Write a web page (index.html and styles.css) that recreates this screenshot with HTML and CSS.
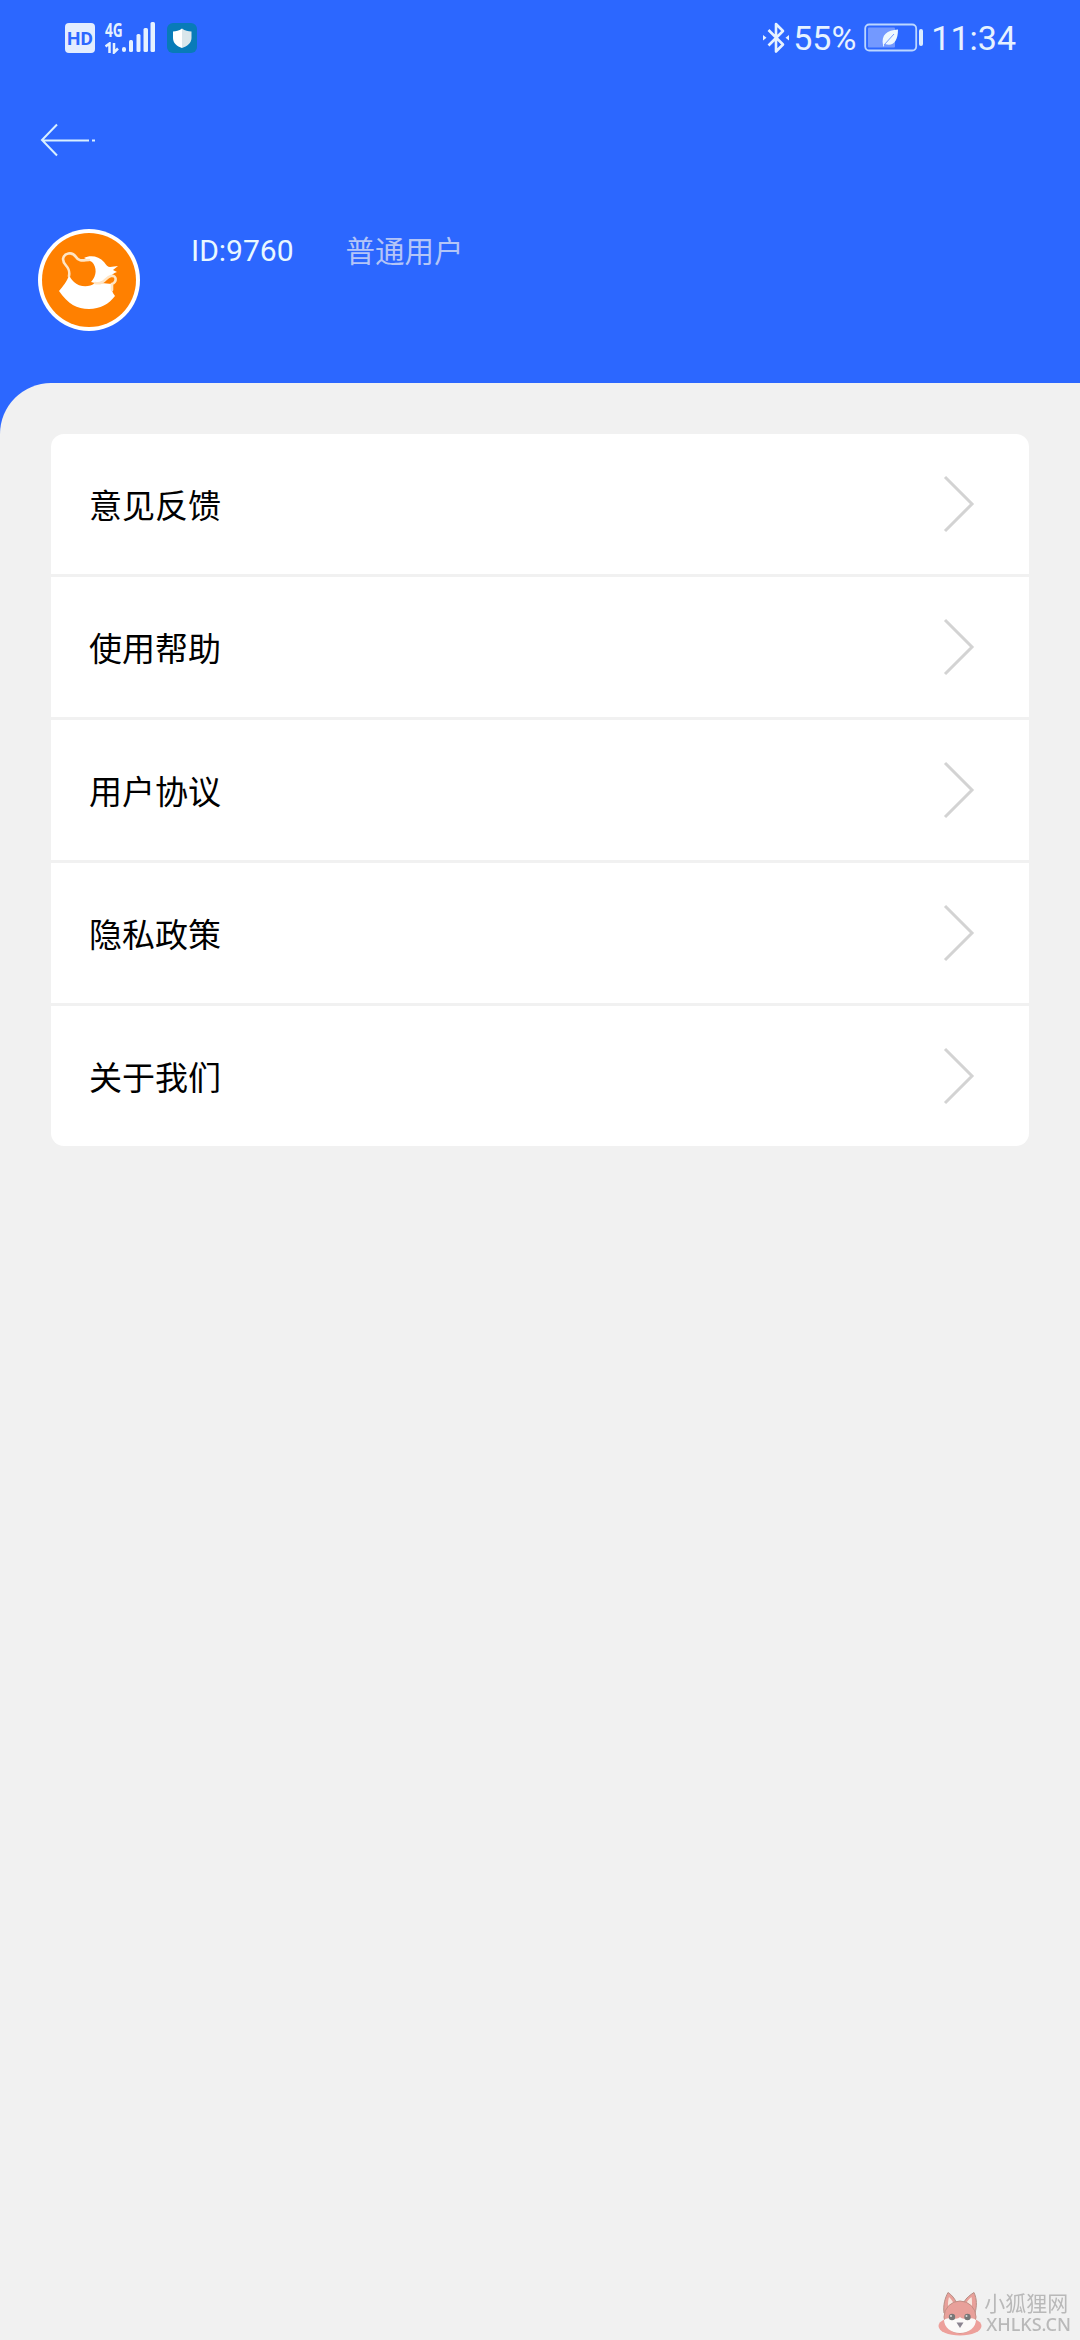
FILE: index.html
```html
<!DOCTYPE html>
<html lang="zh-CN">
<head>
  <meta charset="UTF-8">
  <meta name="viewport" content="width=device-width, initial-scale=1.0">
  <title>个人中心</title>
  <link rel="stylesheet" href="styles.css">
</head>
<body>
  <header class="header">
    <div class="status-bar">
      <div class="status-left">
        <span class="hd-badge">HD</span>
        <div class="network">
          <span class="network-type">4G</span>
          <svg class="network-arrows" viewBox="0 0 16 12">
            <path d="M0.500 4.500 L4.500 1.500 V11 M9 1 V10.500 L13 6.500" />
          </svg>
        </div>
        <svg class="signal" viewBox="0 0 36 32">
          <rect x="1" y="26" width="4" height="5" rx="2" />
          <rect x="8" y="19" width="4" height="12" rx="1.500" />
          <rect x="15.500" y="13" width="4" height="18" rx="1.500" />
          <rect x="22.500" y="7" width="4.500" height="24" rx="1.500" />
          <rect x="29.500" y="1" width="4.500" height="30" rx="1.500" />
        </svg>
        <svg class="shield" viewBox="0 0 30 30">
          <rect width="30" height="30" rx="6" fill="#087bb8" />
          <path d="M15 5.500 C12 8 9 8 6 8.500 V15 C6 20 10 23.500 15 25 Z" fill="#fff" />
          <path d="M15 5.500 C18 8 21 8 24.500 8.500 V15 C24.500 20 20 23.500 15 25 Z" fill="#d9e6eb" />
        </svg>
      </div>
      <div class="status-right">
        <svg class="bluetooth" viewBox="0 0 26 34">
          <path d="M5.500 9 L20 23.500 L13 30.500 V3 L20 10 L5.500 24.500" />
          <path class="dot" d="M0 14 L3.500 16.800 L0 19.500 Z M26 14 L22.500 16.800 L26 19.500 Z" />
        </svg>
        <span class="battery-level">55%</span>
        <svg class="battery" viewBox="0 0 60 30">
          <rect x="1.200" y="1.500" width="51" height="26" rx="4" fill="none" stroke="#bcd7ff" stroke-width="1.800" />
          <rect x="4" y="4.500" width="27" height="20" rx="1" fill="#7399ff" />
          <path d="M19 22 C17 12 23 7 34 6.500 C34 18 29 24 21 21 L19 24 Z" fill="#eef8ff" />
          <path d="M20 22 L30 11" stroke="#7399ff" stroke-width="1" />
          <rect x="55" y="6" width="4" height="17" rx="2" fill="#dcecff" />
        </svg>
        <span class="clock">11:34</span>
      </div>
    </div>

    <button class="back-button" aria-label="返回">
      <svg viewBox="0 0 56 34">
        <path d="M17 1.500 L2 17 L17 32.500 M2 17.400 H49 M52 17.400 H55" />
      </svg>
    </button>

    <div class="profile">
      <div class="avatar">
        <svg viewBox="0 0 102 102">
          <circle cx="51" cy="51" r="51" fill="#fff" />
          <circle cx="51" cy="51" r="47" fill="#ff8000" />
          <path class="pot" d="M31 46 C29 53 25 57 21 62 C30 75 39 80 51 80 C62 80 71 75 77 67 C74 63 73 60 74 55 C66 54 61 54 57 54 C51 59 41 58 36 53 C33 50 32 48 31 46 Z" />
          <path class="pot" d="M46 29 C52 26 61 27 66 33 C68 36 70 38 72 38 L80 37 L75 41 L79 43 C72 45 70 53 57 54 L53 53 C59 47 59 38 54 33 Z" />
          <path class="handle" d="M31 47 C33 37 25 37 25 30 C26 24 34 22 38 28 C41 33 46 31 51 31" />
          <path class="handle" d="M57 54 C67 56 67 48 73 47 C79 46 79 53 74 55 V61" />
        </svg>
      </div>
      <span class="user-id">ID:9760</span>
      <span class="user-role">普通用户</span>
    </div>
  </header>

  <main class="content">
    <ul class="menu-list">
      <li class="menu-item">
        <span>意见反馈</span>
        <svg class="arrow" viewBox="0 0 32 58"><path d="M2 2 L29 29 L2 56" /></svg>
      </li>
      <li class="menu-item">
        <span>使用帮助</span>
        <svg class="arrow" viewBox="0 0 32 58"><path d="M2 2 L29 29 L2 56" /></svg>
      </li>
      <li class="menu-item">
        <span>用户协议</span>
        <svg class="arrow" viewBox="0 0 32 58"><path d="M2 2 L29 29 L2 56" /></svg>
      </li>
      <li class="menu-item">
        <span>隐私政策</span>
        <svg class="arrow" viewBox="0 0 32 58"><path d="M2 2 L29 29 L2 56" /></svg>
      </li>
      <li class="menu-item">
        <span>关于我们</span>
        <svg class="arrow" viewBox="0 0 32 58"><path d="M2 2 L29 29 L2 56" /></svg>
      </li>
    </ul>
  </main>

  <div class="watermark">
    <svg class="fox" viewBox="0 0 44 46">
      <ellipse cx="22" cy="35" rx="21.500" ry="9.500" fill="#eda09b" />
      <path d="M6 22 C5 14 7 7 10 1.500 C14 4 17 8 18 11 H26 C28 7 32 4 36 1.500 C39 8 39 15 37 22 Z" fill="#e8a09a" stroke="#b68f86" stroke-width="1" />
      <path d="M10 14 C10 10 10.500 8 11 6 C14 9 15 11 16 13 L10 17 Z M34 14 C34 10 34 8 33.500 6 C31 8 29 10 28 13 L33 17 Z" fill="#f8e7df" />
      <circle cx="22" cy="26" r="16" fill="#e8a09a" stroke="#c28e85" stroke-width="1" />
      <path d="M6 29 C12 25 19 30 22 26 C25 30 32 25 38 29 C38 36 31 42 22 42 C13 42 6 36 6 29 Z" fill="#fbf9f8" />
      <circle cx="14" cy="26" r="3.200" fill="#777" />
      <circle cx="29.500" cy="26" r="3.200" fill="#777" />
      <circle cx="13" cy="25" r="1" fill="#ddd" />
      <circle cx="28.500" cy="25" r="1" fill="#ddd" />
      <path d="M18.500 31.500 H25.500 L22 37 Z" fill="#8b8490" />
    </svg>
    <div class="watermark-text">
      <span class="watermark-name">小狐狸网</span>
      <span class="watermark-url">XHLKS.CN</span>
    </div>
  </div>
</body>
</html>
```

FILE: styles.css
```css
* {
  margin: 0;
  padding: 0;
  box-sizing: border-box;
}

body {
  font-family: Roboto, 'Noto Sans CJK SC', sans-serif;
  background-color: #f1f1f1;
  color: #000;
  min-height: 100vh;
}

svg {
  display: block;
  flex-shrink: 0;
}

.header {
  height: 434px;
  background: #2c67ff;
}

.status-bar {
  height: 76px;
  padding: 0 64px 0 65px;
  display: flex;
  align-items: center;
  justify-content: space-between;
  color: #e6f2ff;
}

.status-left,
.status-right {
  display: flex;
  align-items: center;
}

.hd-badge {
  width: 30px;
  height: 30px;
  border-radius: 4px;
  background: #e3edff;
  color: #2c67ff;
  font-size: 19px;
  font-weight: 700;
  line-height: 31px;
  text-align: center;
}

.network {
  width: 16px;
  margin-left: 10px;
  display: flex;
  flex-direction: column;
  gap: 5px;
}

.network-type {
  font-family: 'Open Sans', sans-serif;
  font-size: 19px;
  font-weight: 700;
  line-height: 14px;
  transform: scaleX(0.72);
  transform-origin: left;
}

.network-arrows {
  width: 16px;
  height: 12px;
  fill: none;
  stroke: #e6f2ff;
  stroke-width: 2.5;
}

.signal {
  width: 36px;
  height: 32px;
  margin-top: -2px;
  fill: #e6f2ff;
}

.shield {
  width: 30px;
  height: 30px;
  margin-left: 10px;
}

.bluetooth {
  width: 26px;
  height: 34px;
  margin-top: -1px;
  fill: none;
  stroke: #e6f2ff;
  stroke-width: 2.6;
  stroke-linejoin: round;
}

.bluetooth .dot {
  fill: #e6f2ff;
  stroke: none;
}

.battery-level,
.clock {
  font-size: 34px;
  line-height: 76px;
}

.battery-level {
  margin-left: 4px;
}

.battery {
  width: 60px;
  height: 30px;
  margin: 0 7px 0 8px;
}

.back-button {
  display: block;
  height: 34px;
  margin: 47px 0 0 40px;
  background: none;
  border: none;
}

.back-button svg {
  width: 56px;
  height: 34px;
  fill: none;
  stroke: #d9f0ff;
  stroke-width: 2;
}

.profile {
  display: flex;
  align-items: flex-start;
  margin-top: 72px;
  padding-left: 38px;
}

.avatar svg {
  width: 102px;
  height: 102px;
}

.pot {
  fill: #fff;
}

.handle {
  fill: none;
  stroke: #ffe5c5;
  stroke-width: 2.6;
  stroke-linecap: round;
}

.user-id {
  margin-left: 51px;
  font-size: 30px;
  line-height: 43px;
  color: #e9f8ff;
}

.user-role {
  margin-left: 52px;
  font-family: 'Noto Sans CJK SC', sans-serif;
  font-size: 29.5px;
  line-height: 40px;
  color: #b4c5f7;
}

/* overlaps the header so the rounded corner shows blue */
.content {
  margin-top: -51px;
  padding: 51px;
  background: #f1f1f1;
  border-top-left-radius: 51px;
}

.menu-list {
  list-style: none;
  display: flex;
  flex-direction: column;
  gap: 3px;
  border-radius: 13px;
  overflow: hidden;
}

.menu-item {
  height: 140px;
  padding: 0 54px 0 38px;
  background: #fff;
  display: flex;
  align-items: center;
  justify-content: space-between;
  font-family: 'Noto Sans CJK SC', sans-serif;
  font-size: 33px;
}

.arrow {
  width: 32px;
  height: 58px;
  fill: none;
  stroke: #d3d3d3;
  stroke-width: 3;
}

.watermark {
  position: fixed;
  right: 9px;
  bottom: 3px;
  display: flex;
  align-items: center;
  gap: 2px;
  color: #b9b9b9;
}

.fox {
  width: 44px;
  height: 46px;
}

.watermark-text {
  display: flex;
  flex-direction: column;
}

.watermark-name {
  font-family: 'Noto Sans CJK SC', sans-serif;
  font-size: 21px;
  line-height: 21px;
}

.watermark-url {
  margin-left: 2px;
  font-family: 'Noto Sans', sans-serif;
  font-size: 18px;
  font-weight: 500;
  line-height: 23px;
}
```
